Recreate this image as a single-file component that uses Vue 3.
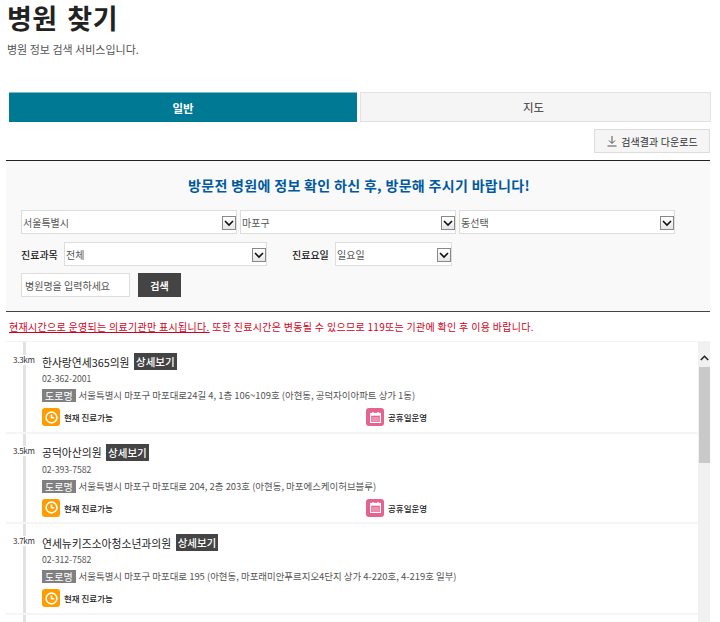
<script setup>
const hospitals = [
  { km: '3.3km', name: '한사랑연세365의원', tel: '02-362-2001', addr: '서울특별시 마포구 마포대로24길 4, 1층 106~109호 (아현동, 공덕자이아파트 상가 1동)', holiday: true },
  { km: '3.5km', name: '공덕아산의원', tel: '02-393-7582', addr: '서울특별시 마포구 마포대로 204, 2층 203호 (아현동, 마포에스케이허브블루)', holiday: true },
  { km: '3.7km', name: '연세뉴키즈소아청소년과의원', tel: '02-312-7582', addr: '서울특별시 마포구 마포대로 195 (아현동, 마포래미안푸르지오4단지 상가 4-220호, 4-219호 일부)', holiday: false },
]
</script>

<template>
  <div class="page">
    <h1 class="title">병원 찾기</h1>
    <p class="sub">병원 정보 검색 서비스입니다.</p>

    <div class="tabs">
      <div class="tab active">일반</div>
      <div class="tab">지도</div>
    </div>

    <div class="tools">
      <button class="download">
        <svg width="12" height="12" viewBox="0 0 12 12" fill="none" stroke="#555" stroke-width="1">
          <path d="M6 1v7M3 5.500 6 8.500 9 5.500M1.500 11h9" />
        </svg>
        검색결과 다운로드
      </button>
    </div>

    <section class="panel">
      <h2 class="notice">방문전 병원에 정보 확인 하신 후, 방문해 주시기 바랍니다!</h2>
      <div class="row three">
        <div class="sel"><select><option>서울특별시</option></select><span class="arrow"><svg width="10" height="7" viewBox="0 0 10 7"><path d="M1 1l4 4 4-4" fill="none" stroke="#111" stroke-width="1.600"/></svg></span></div>
        <div class="sel"><select><option>마포구</option></select><span class="arrow"><svg width="10" height="7" viewBox="0 0 10 7"><path d="M1 1l4 4 4-4" fill="none" stroke="#111" stroke-width="1.600"/></svg></span></div>
        <div class="sel"><select><option>동선택</option></select><span class="arrow"><svg width="10" height="7" viewBox="0 0 10 7"><path d="M1 1l4 4 4-4" fill="none" stroke="#111" stroke-width="1.600"/></svg></span></div>
      </div>
      <div class="row second">
        <label class="lab">진료과목</label>
        <div class="sel dept"><select><option>전체</option></select><span class="arrow"><svg width="10" height="7" viewBox="0 0 10 7"><path d="M1 1l4 4 4-4" fill="none" stroke="#111" stroke-width="1.600"/></svg></span></div>
        <label class="lab day-lab">진료요일</label>
        <div class="sel day"><select><option>일요일</option></select><span class="arrow"><svg width="10" height="7" viewBox="0 0 10 7"><path d="M1 1l4 4 4-4" fill="none" stroke="#111" stroke-width="1.600"/></svg></span></div>
      </div>
      <div class="row third">
        <input class="search" placeholder="병원명을 입력하세요" />
        <button class="go">검색</button>
      </div>
    </section>

    <p class="warn"><u>현재시간으로 운영되는 의료기관만 표시됩니다.</u> 또한 진료시간은 변동될 수 있으므로 119또는 기관에 확인 후 이용 바랍니다.</p>

    <div class="listbox">
      <div class="list">
        <article v-for="h in hospitals" :key="h.name" class="item">
          <span class="km">{{ h.km }}</span>
          <div class="head"><span class="name">{{ h.name }}</span><span class="more">상세보기</span></div>
          <div class="tel">{{ h.tel }}</div>
          <div class="addr"><span class="road">도로명</span>{{ h.addr }}</div>
          <div class="status">
            <div class="stat">
              <span class="ico orange">
                <svg width="13" height="13" viewBox="0 0 14 14" fill="none" stroke="#fff" stroke-width="1.700"><circle cx="7" cy="7" r="5.800"/><path d="M7 3.800V7.300H10"/></svg>
              </span>
              현재 진료가능
            </div>
            <div v-if="h.holiday" class="stat holiday">
              <span class="ico pink">
                <svg width="11" height="11" viewBox="0 0 11 11"><path d="M3 0v2M8 0v2" stroke="#fff" stroke-width="1.300"/><rect x=".6" y="1.500" width="9.800" height="9" fill="none" stroke="#fff" stroke-width="1.200"/><rect x=".6" y="1.500" width="9.800" height="2.200" fill="#fff"/><rect x="2" y="5" width="7" height="4.500" fill="#fff" opacity=".3"/></svg>
              </span>
              공휴일운영
            </div>
          </div>
        </article>
      </div>
      <div class="scrollbar">
        <div class="up"><svg width="9" height="6" viewBox="0 0 9 6"><path d="M.8 5 4.500 1.300 8.200 5" fill="none" stroke="#222" stroke-width="1.600"/></svg></div>
        <div class="thumb"></div>
      </div>
    </div>
  </div>
</template>

<style>
html, body { margin: 0; background: #fff; }
</style>

<style scoped>
.page {
  width: 720px;
  height: 622px;
  overflow: hidden;
  box-sizing: border-box;
  padding: 0 10px 0 6px;
  font-family: "Noto Sans CJK KR", "Liberation Sans", sans-serif;
  color: #333;
}
.title {
  margin: 0;
  padding-left: 1px;
  font-size: 27px;
  line-height: 36px;
  font-weight: 700;
  color: #222;
  letter-spacing: 0.5px;
  word-spacing: 3px;
}
.sub {
  margin: 4px 0 0 1px;
  font-size: 11px;
  line-height: 18px;
  color: #555;
}
.tabs {
  display: flex;
  gap: 3px;
  margin: 34px 0 0 3px;
  height: 30px;
}
.tab {
  flex: 1;
  display: flex;
  align-items: center;
  justify-content: center;
  box-sizing: border-box;
  background: #f5f5f5;
  border: 1px solid #e2e2e2;
  font-size: 11.500px;
  color: #333;
}
.tab.active {
  flex: 0 0 348px;
  background: #007994;
  border: 0;
  border-top: 1px solid #7fb8c6;
  color: #fff;
  font-weight: 700;
}
.tab:last-child { flex: 0 0 351px; padding-right: 4px; }
.tools {
  display: flex;
  justify-content: flex-end;
  margin-top: 7px;
}
.download {
  display: flex;
  align-items: center;
  justify-content: center;
  gap: 3px;
  box-sizing: border-box;
  width: 116px;
  height: 24px;
  padding: 0;
  background: #f5f5f5;
  border: 1px solid #ddd;
  font: inherit;
  font-size: 10px;
  letter-spacing: 0.1px;
  color: #333;
}
.panel {
  box-sizing: border-box;
  height: 152px;
  margin-top: 7px;
  padding-top: 14px;
  background: #f9f9f9;
  border-top: 1px solid #222;
  border-bottom: 1px solid #444;
}
.notice {
  margin: 0;
  padding-left: 2px;
  text-align: center;
  font-size: 14px;
  line-height: 20px;
  font-weight: 700;
  letter-spacing: 0.32px;
  color: #00599d;
}
.row { display: flex; align-items: center; padding-left: 15px; }
.three { margin-top: 15px; gap: 3px; }
.second { margin-top: 8px; }
.third { margin-top: 7px; }
.sel {
  position: relative;
  box-sizing: border-box;
  width: 216px;
  height: 24px;
  background: #fff;
  border: 1px solid #ddd;
}
.sel select {
  appearance: none;
  display: block;
  width: 100%;
  height: 100%;
  padding: 0 0 0 1px;
  border: 0;
  background: transparent;
  font: inherit;
  font-size: 10px;
  color: #555;
}
.arrow {
  position: absolute;
  right: 0;
  top: 5px;
  box-sizing: border-box;
  width: 14px;
  height: 14px;
  display: flex;
  align-items: center;
  justify-content: center;
  background: linear-gradient(#fff, #e6e6e6);
  border: 1px solid #888;
}
.lab {
  font-size: 10px;
  font-weight: 500;
  color: #222;
  width: 43px;
  flex: none;
}
.dept { width: 203px; }
.day-lab { margin-left: 25px; }
.day { width: 117px; }
.search {
  box-sizing: border-box;
  width: 109px;
  height: 24px;
  padding: 0 3px;
  background: #fff;
  border: 1px solid #ddd;
  font: inherit;
  font-size: 10px;
}
.search::placeholder { color: #555; opacity: 1; }
.go {
  width: 43px;
  height: 24px;
  margin-left: 8px;
  padding: 0;
  background: #444;
  border: 0;
  color: #fff;
  font: inherit;
  font-size: 10px;
  font-weight: 700;
}
.warn {
  margin: 8px 0 0 3px;
  font-size: 10px;
  line-height: 14px;
  letter-spacing: 0.3px;
  color: #d0021b;
  white-space: nowrap;
}
.listbox {
  display: flex;
  height: 281px;
  margin-top: 7px;
  border-top: 1px solid #f3f3f3;
  overflow: hidden;
}
.list {
  flex: 1;
  padding-top: 1px;
  background: linear-gradient(#e2e2e2, #e2e2e2) 17px 0 / 3px 100% no-repeat;
}
.item {
  position: relative;
  box-sizing: border-box;
  height: 90.500px;
  padding: 9px 0 0 36px;
  border-bottom: 2px solid #f5f5f5;
}
.km {
  position: absolute;
  left: 7px;
  top: 12px;
  padding: 0;
  background: #fff;
  font-size: 8px;
  letter-spacing: -0.25px;
  line-height: 10px;
  color: #333;
}
.head { display: flex; align-items: center; gap: 4.500px; height: 19px; }
.name { font-size: 10.800px; color: #222; }
.more {
  background: #444;
  color: #fff;
  font-size: 10.500px;
  line-height: 17px;
  padding: 0 2px;
  font-weight: 500;
}
.tel { margin-top: 2px; font-size: 8.700px; line-height: 12px; color: #555; }
.addr {
  display: flex;
  align-items: center;
  margin-top: 4px;
  font-size: 9.450px;
  line-height: 13px;
  color: #555;
  white-space: nowrap;
}
.road {
  margin-right: 3px;
  padding: 0 3px;
  background: #808080;
  color: #fff;
  font-size: 10px;
  line-height: 13px;
}
.status { display: flex; margin-top: 6px; }
.stat {
  display: flex;
  align-items: center;
  gap: 4px;
  width: 324px;
  font-size: 8.500px;
  font-weight: 500;
  color: #222;
}
.ico {
  width: 18px;
  height: 18px;
  border-radius: 3px;
  display: flex;
  align-items: center;
  justify-content: center;
  flex: none;
}
.orange { background: #ff9c00; }
.pink { background: #e4648f; }
.scrollbar {
  flex: none;
  width: 12px;
  background: #f1f1f1;
}
.up {
  box-sizing: border-box;
  height: 25px;
  padding-top: 7px;
  display: flex;
  align-items: center;
  justify-content: center;
}
.thumb { height: 96px; margin: 0 0 0 1px; background: #c9c9c9; }
</style>
